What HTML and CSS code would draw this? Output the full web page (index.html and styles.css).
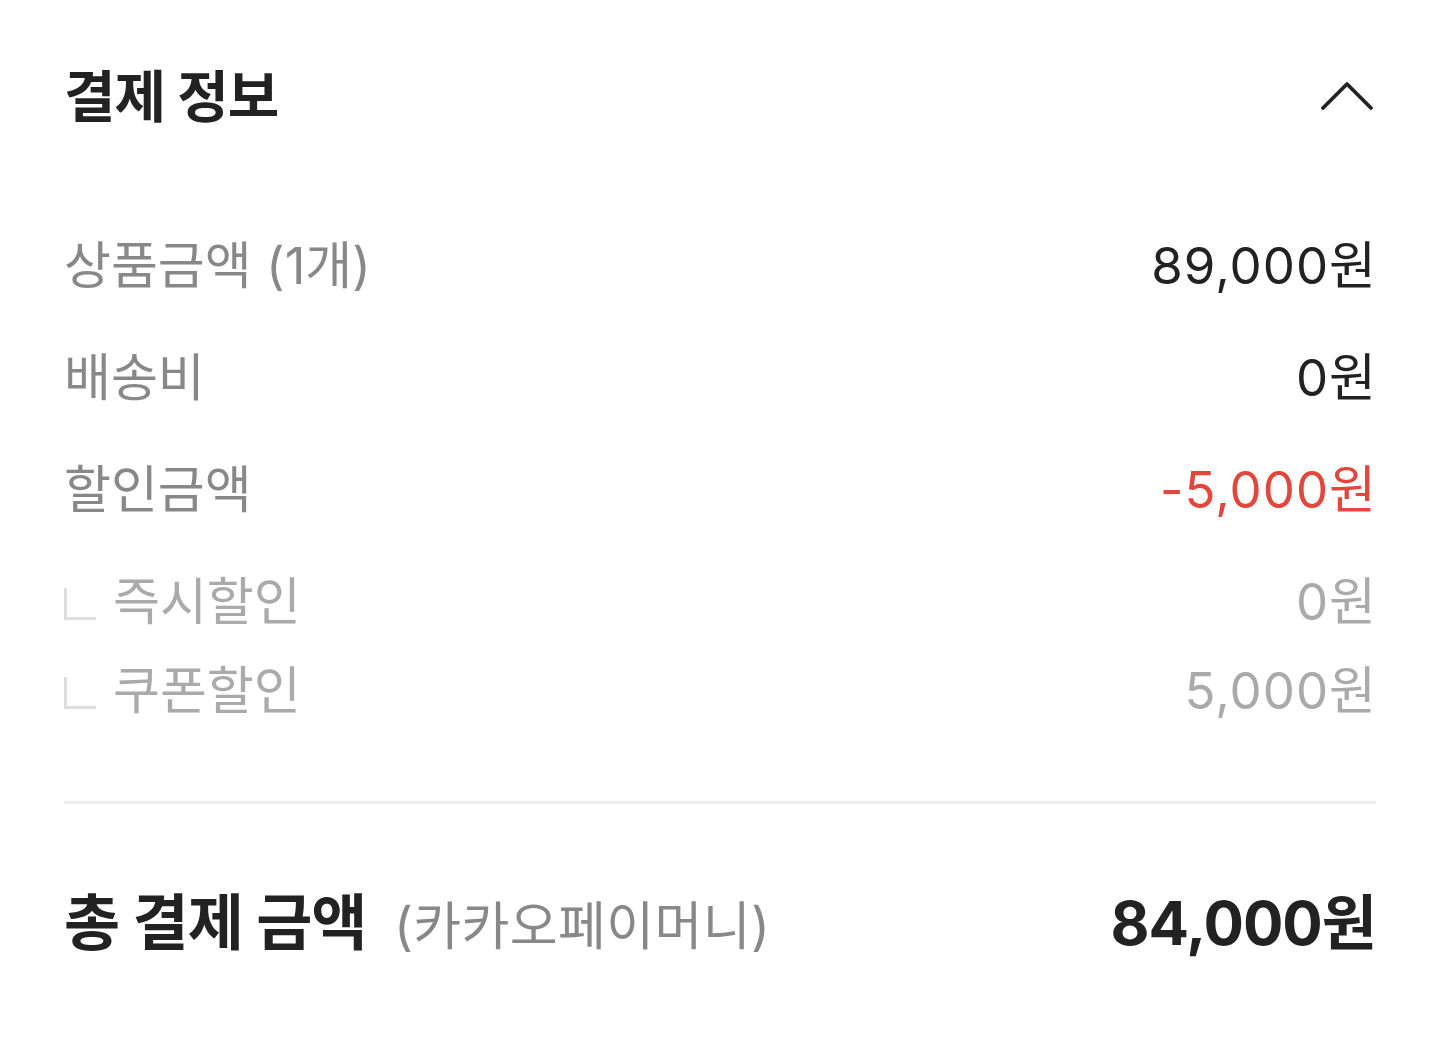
FILE: index.html
```html
<!DOCTYPE html>
<html lang="ko">
<head>
<meta charset="utf-8">
<title>결제 정보</title>
<link rel="stylesheet" href="styles.css">
</head>
<body>
<section class="pay">
  <header class="pay-head">
    <h2 class="pay-title">결제 정보</h2>
    <svg class="chev" width="52" height="30" viewBox="0 0 52 30" aria-hidden="true">
      <path d="M2 27 L26 3 L50 27" fill="none" stroke="#222" stroke-width="3.8" stroke-linecap="round" stroke-linejoin="round"/>
    </svg>
  </header>
  <div class="rows">
    <div class="row"><span class="label">상품금액 (1개)</span><span class="value">89,000원</span></div>
    <div class="row"><span class="label">배송비</span><span class="value">0원</span></div>
    <div class="row"><span class="label">할인금액</span><span class="value red">-5,000원</span></div>
    <div class="row sub first"><span class="label"><i class="corner"></i>즉시할인</span><span class="value">0원</span></div>
    <div class="row sub"><span class="label"><i class="corner"></i>쿠폰할인</span><span class="value">5,000원</span></div>
  </div>
  <hr class="divider">
  <div class="total">
    <span class="total-label">총 결제 금액 <span class="method">(카카오페이머니)</span></span>
    <span class="total-value">84,000원</span>
  </div>
</section>
</body>
</html>
```
FILE: styles.css
```css
html, body {
  margin: 0;
  padding: 0;
  background: #fff;
}
body {
  font-family: "Inter", "Noto Sans CJK KR", "Noto Sans", sans-serif;
  color: #222;
}
.pay {
  padding: 60px 63px 0 64px;
}
.pay-head {
  display: flex;
  justify-content: space-between;
  align-items: center;
  height: 74px;
}
.pay-title {
  margin: 0;
  font-size: 56px;
  font-weight: 700;
  line-height: 74px;
  letter-spacing: -1px;
}
.chev {
  display: block;
  margin-top: -2px;
  margin-right: 3px;
}
.rows {
  margin-top: 72px;
}
.row {
  display: flex;
  justify-content: space-between;
  align-items: center;
  height: 112px;
  font-size: 51px;
}
.label {
  color: #888;
  display: flex;
  align-items: center;
}
.value {
  color: #222;
  letter-spacing: 1px;
  margin-right: -1px;
}
.value.red {
  color: #e2463c;
}
.row.sub {
  height: 89px;
}
.row.sub.first {
  margin-top: 11px;
}
.row.sub .label,
.row.sub .value {
  color: #aaa;
}
.corner {
  display: inline-block;
  width: 29px;
  height: 29px;
  border-left: 3px solid #ddd;
  border-bottom: 3px solid #ddd;
  margin-right: 17px;
  margin-top: 12px;
}
.divider {
  margin: 70px 0 0;
  border: 0;
  height: 3px;
  background: #eee;
}
.total {
  display: flex;
  justify-content: space-between;
  align-items: center;
  height: 100px;
  margin-top: 64px;
}
.total-label {
  font-size: 61px;
  font-weight: 700;
  letter-spacing: -1px;
}
.method {
  font-size: 52px;
  font-weight: 400;
  color: #888;
  letter-spacing: 0.4px;
  margin-left: 14px;
}
.total-value {
  font-size: 60px;
  font-weight: 700;
  letter-spacing: -1px;
}
```
